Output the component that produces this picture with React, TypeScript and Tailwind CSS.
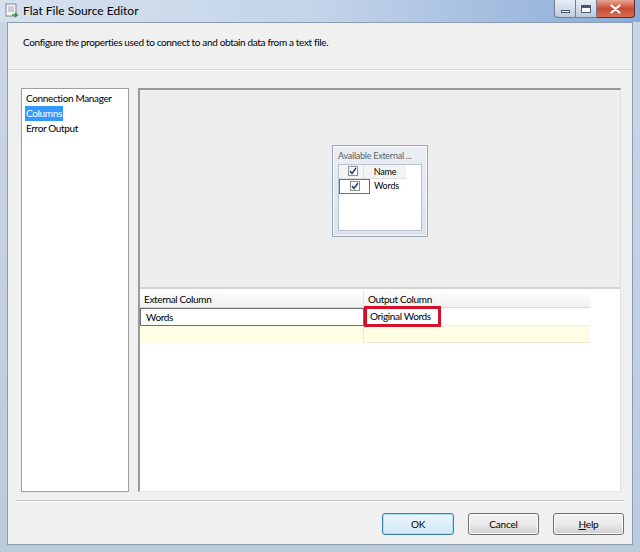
import React from "react";

function TitleIcon() {
  return (
    <svg width="16" height="16" viewBox="0 0 16 16">
      <rect x="2" y="1" width="10" height="12" fill="#f4f6f8" stroke="#7d8896" />
      <line x1="4" y1="4" x2="10" y2="4" stroke="#9aa6b4" />
      <line x1="4" y1="6" x2="10" y2="6" stroke="#9aa6b4" />
      <line x1="4" y1="8" x2="10" y2="8" stroke="#9aa6b4" />
      <path d="M8 12h5l-2-2M13 12l-2 2" stroke="#2f9a2f" strokeWidth="1.6" fill="none" />
    </svg>
  );
}

function CheckBox() {
  return (
    <span className="inline-flex h-[10px] w-[10px] items-center justify-center border border-[#8e8f8f] bg-gradient-to-br from-[#f4f4f4] to-white">
      <svg width="8" height="8" viewBox="0 0 8 8">
        <path d="M1 4l2 2.5L7 1" stroke="#21397a" strokeWidth="1.4" fill="none" />
      </svg>
    </span>
  );
}

function DlgButton({ children, primary }: { children: React.ReactNode; primary?: boolean }) {
  return (
    <button
      className={
        "flex h-[22px] items-center justify-center rounded-[3px] border text-[10px] tracking-[-0.2px] text-black " +
        (primary
          ? "w-[72px] border-[#3c7fb1] bg-gradient-to-b from-[#eaf6fd] to-[#d3e9f5] shadow-[inset_0_0_0_1px_#a8e0f8]"
          : "w-[71px] border-[#707070] bg-gradient-to-b from-[#f2f2f2] via-[#ebebeb] to-[#cfcfcf] shadow-[inset_0_0_0_1px_#fcfcfc]")
      }
    >
      {children}
    </button>
  );
}

export default function App() {
  return (
    <div className="flex h-[552px] w-[640px] flex-col overflow-hidden bg-gradient-to-b from-[#c9d7e7] to-[#bccbdc] font-['Lato',sans-serif] text-black">
      {/* title bar */}
      <div className="flex h-[22px] items-start bg-gradient-to-r from-[#d6e1ee] via-[#c3d4e9] to-[#8aabd6]">
        <div className="flex items-center gap-[3px] pl-[4px] pt-[3px]">
          <TitleIcon />
          <span className="text-[12px] leading-[16px]">Flat File Source Editor</span>
        </div>
        <div className="ml-auto mr-[5px] flex h-[18px]">
          <div className="flex w-[22px] items-center justify-center rounded-bl-[4px] border border-t-0 border-[#6d7d92] bg-gradient-to-b from-[#e6edf5] via-[#d3dde9] to-[#bccadb]">
            <span className="mt-[5px] h-[3px] w-[9px] border border-[#4a5870] bg-white" />
          </div>
          <div className="flex w-[21px] items-center justify-center border-b border-r border-[#6d7d92] bg-gradient-to-b from-[#e6edf5] via-[#d3dde9] to-[#bccadb]">
            <span className="h-[8px] w-[10px] border border-t-[3px] border-[#4a5870] bg-white" />
          </div>
          <div className="flex w-[38px] items-center justify-center rounded-br-[4px] border border-t-0 border-l-0 border-[#6b2a22] bg-gradient-to-b from-[#e8a493] via-[#c94a35] to-[#d76e52]">
            <svg width="11" height="10" viewBox="0 0 11 10">
              <path d="M1.5 1.5l8 7M9.5 1.5l-8 7" stroke="#fff" strokeWidth="2.2" strokeLinecap="round" />
            </svg>
          </div>
        </div>
      </div>

      {/* frame + client */}
      <div className="flex flex-1 px-[7px] pb-[7px]">
        <div className="flex flex-1 flex-col border border-[#8b9bb0] bg-[#f0f0f0]">
          {/* header */}
          <div className="h-[47px] border-b border-[#d9d9d9] pl-[15px] pt-[12px] text-[10px] leading-[15px] tracking-[-0.35px]">
            Configure the properties used to connect to and obtain data from a text file.
          </div>
          <div className="h-px bg-white" />

          {/* panels */}
          <div className="flex gap-[9px] pl-[13px] pr-[11px] pt-[17px]">
            <div className="h-[404px] w-[108px] border border-[#a0a0a0] bg-white pl-[3px] pt-[2px] text-[10px] leading-[15px] tracking-[-0.35px]">
              <div className="whitespace-nowrap px-[1px]">Connection Manager</div>
              <div className="w-fit bg-[#3399ff] px-[1px] text-white">Columns</div>
              <div className="px-[1px]">Error Output</div>
            </div>

            <div className="flex h-[404px] flex-1 flex-col border-b border-l-2 border-r border-t-2 border-b-[#e2e2e2] border-l-[#9a9a9a] border-r-[#e2e2e2] border-t-[#9a9a9a]">
              {/* canvas */}
              <div className="flex h-[199px] items-center justify-center border-b-2 border-[#d4d4d4] bg-[#eeeeee]">
                <div className="mt-[4px] h-[92px] w-[96px] border border-[#9ca6b3] bg-gradient-to-b from-[#e9eef4] to-[#dde4ec] px-[5px] pt-[3px] shadow-[inset_0_0_0_1px_#f6f8fb]">
                  <div className="whitespace-nowrap text-[9px] leading-[14px] tracking-[-0.25px] text-[#5a6472]">Available External ...</div>
                  <div className="mt-[1px] h-[67px] border border-[#b8c2ce] bg-white">
                    <div className="flex h-[14px] text-[9px] leading-[13px] tracking-[-0.2px]">
                      <div className="flex w-[25px] items-center justify-center border-b border-r border-[#e0e0e0] bg-[#f3f3f3] pl-[3px]">
                        <CheckBox />
                      </div>
                      <div className="w-[42px] border-b border-[#e0e0e0] bg-[#f3f3f3] text-center">Name</div>
                    </div>
                    <div className="flex h-[15px] text-[9px] leading-[13px] tracking-[-0.2px]">
                      <div className="flex w-[31px] items-center justify-center border border-[#6d6d6d]">
                        <CheckBox />
                      </div>
                      <div className="pl-[4px]">Words</div>
                    </div>
                  </div>
                </div>
              </div>

              {/* grid */}
              <div className="flex-1 bg-white pt-[2px]">
                <div className="w-[450px] text-[10px] leading-[16px] tracking-[-0.35px]">
                  <div className="flex h-[17px] border-b border-[#d7d7d7] bg-gradient-to-b from-white to-[#f1f1f1]">
                    <div className="w-[224px] border-r border-[#e3e3e3] pl-[4px]">External Column</div>
                    <div className="flex-1 pl-[4px]">Output Column</div>
                  </div>
                  <div className="flex h-[18px]">
                    <div className="w-[224px] border border-[#6e6e6e] pl-[5px] leading-[16px]">Words</div>
                    <div className="relative flex-1 border-b border-[#ececec] pl-[6px] leading-[17px]">
                      Original Words
                      <span className="absolute left-0 top-[-2px] h-[21px] w-[77px] border-[3px] border-[#d4112b]" />
                    </div>
                  </div>
                  <div className="flex h-[17px] bg-[#fefee4]">
                    <div className="w-[224px] border-r border-[#ececd0]" />
                    <div className="flex-1 border-b border-[#ececd0]" />
                  </div>
                </div>
              </div>
            </div>
          </div>

          {/* separator */}
          <div className="mx-[8px] mt-[8px] h-px bg-[#c8c8c8]" />
          <div className="mx-[8px] h-px bg-white" />

          {/* buttons */}
          <div className="flex justify-end gap-[14px] pr-[8px] pt-[11px]">
            <DlgButton primary>OK</DlgButton>
            <DlgButton>Cancel</DlgButton>
            <DlgButton>
              <span>
                <span className="underline">H</span>elp
              </span>
            </DlgButton>
          </div>
        </div>
      </div>
    </div>
  );
}
